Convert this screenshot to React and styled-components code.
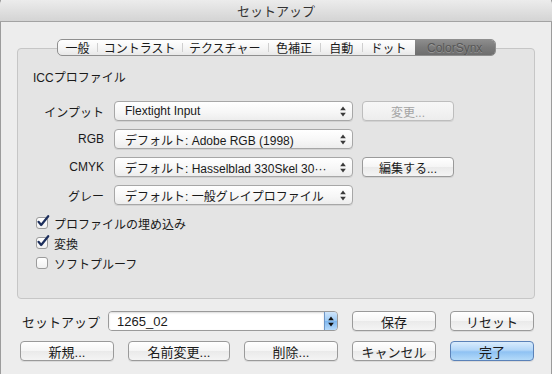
import React from "react";
import styled, { createGlobalStyle } from "styled-components";

const GlobalStyle = createGlobalStyle`
  html, body {
    margin: 0;
    padding: 0;
    background: #ededed;
    overflow: hidden;
  }
  body {
    font-family: "Liberation Sans", "Noto Sans CJK JP", sans-serif;
    color: #1a1a1a;
  }
`;

const tabs = [
  { label: "一般", width: 40 },
  { label: "コントラスト", width: 85 },
  { label: "テクスチャー", width: 86 },
  { label: "色補正", width: 53 },
  { label: "自動", width: 42 },
  { label: "ドット", width: 53 },
  { label: "ColorSynx", width: 80, active: true },
];

const profileRows = [
  { label: "インプット", value: "Flextight Input", button: "変更...", disabled: true },
  { label: "RGB", value: "デフォルト: Adobe RGB (1998)" },
  { label: "CMYK", value: "デフォルト: Hasselblad 330Skel 30···", button: "編集する..." },
  { label: "グレー", value: "デフォルト: 一般グレイプロファイル" },
];

const checks = [
  { label: "プロファイルの埋め込み", checked: true },
  { label: "変換", checked: true },
  { label: "ソフトプルーフ", checked: false },
];

function UpDown({ color = "#3a3a3a" }) {
  return (
    <svg width="6" height="11" viewBox="0 0 6 11">
      <path d="M3 0.5 L5.8 4.2 L0.2 4.2 Z" fill={color} />
      <path d="M3 10.5 L5.8 6.8 L0.2 6.8 Z" fill={color} />
    </svg>
  );
}

function CheckBox({ checked }) {
  return (
    <Box>
      {checked && (
        <svg width="14" height="14" viewBox="0 0 14 14">
          <path
            d="M2.5 6.8 L5.2 10 L12.2 1.2"
            fill="none"
            stroke="#1d2f5c"
            strokeWidth="2.2"
            strokeLinecap="round"
            strokeLinejoin="round"
          />
        </svg>
      )}
    </Box>
  );
}

export default function App() {
  return (
    <>
      <GlobalStyle />
      <Window>
        <TitleBar>セットアップ</TitleBar>
        <TabBar>
          {tabs.map((t, i) => (
            <Tab key={t.label} $width={t.width} $active={t.active} $first={i === 0}>
              {t.label}
            </Tab>
          ))}
        </TabBar>
        <Group>
          <Heading>ICCプロファイル</Heading>
          <ProfileGrid>
            {profileRows.map((r) => (
              <React.Fragment key={r.label}>
                <RowLabel>{r.label}</RowLabel>
                <Popup>
                  <span>{r.value}</span>
                  <UpDown />
                </Popup>
                {r.button ? (
                  <Button $disabled={r.disabled}>{r.button}</Button>
                ) : (
                  <span />
                )}
              </React.Fragment>
            ))}
          </ProfileGrid>
          <CheckList>
            {checks.map((c) => (
              <CheckRow key={c.label}>
                <CheckBox checked={c.checked} />
                {c.label}
              </CheckRow>
            ))}
          </CheckList>
        </Group>
        <Footer>
          <SetupCell>
            <SetupLabel>セットアップ</SetupLabel>
            <Combo>
              <ComboField>1265_02</ComboField>
              <Stepper>
                <UpDown color="#111" />
              </Stepper>
            </Combo>
          </SetupCell>
          <Button $big>保存</Button>
          <Button $big>リセット</Button>
          <Button $big>新規...</Button>
          <Button $big>名前変更...</Button>
          <Button $big>削除...</Button>
          <Button $big>キャンセル</Button>
          <Button $big $primary>完了</Button>
        </Footer>
      </Window>
    </>
  );
}

const Window = styled.div`
  width: 552px;
  height: 374px;
  box-sizing: border-box;
  background: #ededed;
  box-shadow: inset 1px 0 #9c9c9c, inset -1px 0 #9c9c9c;
  display: flex;
  flex-direction: column;
`;

const TitleBar = styled.div`
  height: 21px;
  border-bottom: 1px solid #a3a3a3;
  background: linear-gradient(#ececec, #d4d4d4);
  border-radius: 4px 4px 0 0;
  display: flex;
  align-items: center;
  justify-content: center;
  font-size: 13px;
  color: #333;
`;

const TabBar = styled.div`
  margin: 17px auto -8px;
  display: flex;
  height: 17px;
  border: 1px solid #8f8f8f;
  border-radius: 5px;
  overflow: hidden;
  background: linear-gradient(#ffffff, #f5f5f5 55%, #e8e8e8);
  position: relative;
  z-index: 1;
  box-sizing: border-box;
  width: 439px;
`;

const Tab = styled.div`
  width: ${(p) => p.$width}px;
  position: relative;
  display: flex;
  align-items: center;
  justify-content: center;
  font-size: 12px;
  color: ${(p) => (p.$active ? "#565656" : "#1a1a1a")};
  background: ${(p) =>
    p.$active ? "linear-gradient(#8d8d8d, #7a7a7a 50%, #6e6e6e)" : "transparent"};
  text-shadow: ${(p) => (p.$active ? "0 1px 0 rgba(255,255,255,0.25)" : "none")};
  &::before {
    content: "";
    display: ${(p) => (p.$first || p.$active ? "none" : "block")};
    position: absolute;
    left: 0;
    top: 3px;
    bottom: 3px;
    width: 1px;
    background: #cfcfcf;
  }
`;

const Group = styled.div`
  margin: 0 17px;
  height: 251px;
  box-sizing: border-box;
  border: 1px solid #c6c6c6;
  border-radius: 4px;
  background: #e4e4e4;
  padding: 22px 15px 0;
`;

const Heading = styled.div`
  font-size: 12px;
  line-height: 15px;
  height: 15px;
`;

const ProfileGrid = styled.div`
  margin-top: 15px;
  display: grid;
  grid-template-columns: 71px 239px 91px;
  column-gap: 10px;
  row-gap: 8px;
  grid-auto-rows: 20px;
  & > :nth-child(3n) {
    margin-left: -1px;
  }
`;

const RowLabel = styled.div`
  font-size: 12px;
  text-align: right;
  align-self: center;
`;

const Popup = styled.div`
  box-sizing: border-box;
  height: 20px;
  border: 1px solid #a7a7a7;
  border-radius: 4px;
  background: linear-gradient(#ffffff, #f6f6f6 60%, #ededed);
  box-shadow: 0 1px 0 rgba(0, 0, 0, 0.08);
  display: flex;
  align-items: center;
  justify-content: space-between;
  padding: 0 6px 0 10px;
  font-size: 12px;
  white-space: nowrap;
  overflow: hidden;
`;

const Button = styled.div`
  box-sizing: border-box;
  height: 20px;
  border: 1px solid ${(p) => (p.$primary ? "#5b82b8" : p.$disabled ? "#bdbdbd" : "#9a9a9a")};
  border-radius: 4px;
  background: ${(p) =>
    p.$primary
      ? "linear-gradient(#d9ecfd, #b2d6f8 45%, #8fc2f3 55%, #b3daf9)"
      : p.$disabled
      ? "linear-gradient(#f7f7f7, #ededed)"
      : "linear-gradient(#ffffff, #f5f5f5 50%, #eaeaea 51%, #f4f4f4)"};
  box-shadow: 0 1px 0 rgba(0, 0, 0, 0.08);
  display: flex;
  align-items: center;
  justify-content: center;
  font-size: ${(p) => (p.$big ? "13px" : "12px")};
  color: ${(p) => (p.$disabled ? "#a3a3a3" : "#1a1a1a")};
  white-space: nowrap;
`;

const CheckList = styled.div`
  margin-top: 8px;
  display: flex;
  flex-direction: column;
  padding-left: 3px;
`;

const CheckRow = styled.div`
  height: 20px;
  display: flex;
  align-items: center;
  gap: 6px;
  font-size: 12px;
`;

const Box = styled.div`
  width: 12px;
  height: 12px;
  box-sizing: border-box;
  border: 1px solid #9b9b9b;
  border-radius: 3px;
  background: linear-gradient(#ffffff, #f0f0f0);
  position: relative;
  flex-shrink: 0;
  svg {
    position: absolute;
    left: -1px;
    top: -3px;
  }
`;

const Footer = styled.div`
  margin-top: 12px;
  padding-left: 20px;
  display: grid;
  grid-template-columns: 94px 102px 94px 84px 84px;
  column-gap: 14px;
  row-gap: 10px;
  grid-auto-rows: 20px;
`;

const SetupCell = styled.div`
  grid-column: 1 / span 3;
  display: flex;
  align-items: center;
  justify-content: space-between;
  padding-left: 2px;
`;

const SetupLabel = styled.div`
  font-size: 13px;
`;

const Combo = styled.div`
  width: 230px;
  height: 20px;
  display: flex;
  box-sizing: border-box;
  border: 1px solid #9a9a9a;
  border-radius: 4px;
  overflow: hidden;
  box-shadow: inset 0 1px 1px rgba(0, 0, 0, 0.12);
`;

const ComboField = styled.div`
  flex: 1;
  background: #fff;
  font-size: 13px;
  display: flex;
  align-items: center;
  padding-left: 8px;
  box-shadow: inset 0 1px 2px rgba(0, 0, 0, 0.15);
`;

const Stepper = styled.div`
  width: 12px;
  border-left: 1px solid #6f97c7;
  background: linear-gradient(#cfe5fb, #9ccaf5 50%, #7db6ef 51%, #b8dbfb);
  display: flex;
  align-items: center;
  justify-content: center;
`;
